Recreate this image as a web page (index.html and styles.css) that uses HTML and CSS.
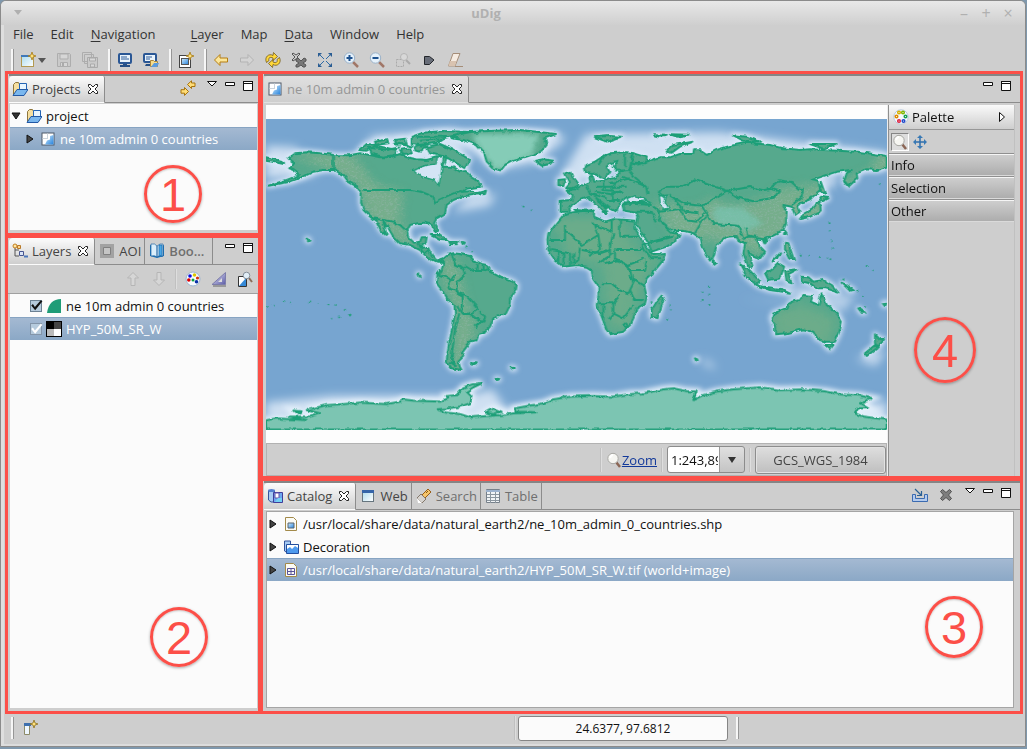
FILE: index.html
```html
<!DOCTYPE html>
<html lang="en">
<head>
<meta charset="utf-8">
<title>uDig</title>
<link rel="stylesheet" href="styles.css">
</head>
<body>
<svg class="sprite" aria-hidden="true">
  <defs>
    <linearGradient id="g-blue" x1="0" y1="0" x2="1" y2="1"><stop offset="0" stop-color="#d4ecfb"/><stop offset="1" stop-color="#2482dd"/></linearGradient>
    <linearGradient id="g-sky" x1="0" y1="0" x2="1" y2="1"><stop offset="0" stop-color="#a9dbef"/><stop offset="1" stop-color="#fff"/></linearGradient>
    <linearGradient id="g-violet" x1="0" y1="0" x2="1" y2="1"><stop offset="0" stop-color="#eef"/><stop offset="1" stop-color="#5a5aa5"/></linearGradient>
  </defs>
  <symbol id="i-new" viewBox="0 0 16 16"><rect x="1.500" y="3.500" width="12" height="11" fill="url(#g-sky)" stroke="#b39a52"/><path d="M1 3h9v2H1z" fill="#3f78b8"/><path d="M12 0l1 3 3 1-3 1-1 3-1-3-3-1 3-1z" fill="#ffe17a" stroke="#a77b16" stroke-width=".8"/></symbol>
  <symbol id="i-save" viewBox="0 0 16 16"><path d="M1.500 1.500h12l1 1v12h-13z" fill="#cacaca" stroke="#adadad"/><path d="M4 2h8v5H4zM4.500 10.500h7v4h-7z" fill="#d6d6d6" stroke="#adadad"/><path d="M6 11h2v3H6z" fill="#aaa"/></symbol>
  <symbol id="i-saveall" viewBox="0 0 16 16"><path d="M.5.500h9v9h-9zM2.500 2.500h9v9h-9z" fill="#cecece" stroke="#adadad"/><path d="M5.500 5.500h10v10h-10z" fill="#cacaca" stroke="#aaa"/><path d="M7.500 6h6v3h-6zM8.500 12h4v3h-4z" fill="#d8d8d8" stroke="#aaa"/></symbol>
  <symbol id="i-screen" viewBox="0 0 16 16"><rect x="2" y="2" width="12" height="9" rx="1" fill="#e9f3fb" stroke="#2a5795" stroke-width="2"/><path d="M4 5h6M4 7h8" stroke="#315f9b"/><path d="M6 12h4v1h3v2H3v-2h3z" fill="#254f86"/></symbol>
  <symbol id="i-screens" viewBox="0 0 16 16"><rect x="1" y="2" width="12" height="8" rx="1" fill="#e9f3fb" stroke="#2a5795" stroke-width="2"/><path d="M3 5h6M3 7h4" stroke="#315f9b"/><path d="M3 12h4v2H2z" fill="#254f86"/><path d="M7.500 14.500v-6h3l1 1h3v5z" fill="#f7dd8c" stroke="#a8853d"/><path d="M8 15l3-4h5l-2 4z" fill="#5b9be0"/></symbol>
  <symbol id="i-newmap" viewBox="0 0 16 16"><rect x="1.500" y="3.500" width="11" height="12" fill="#fff" stroke="#444"/><rect x="3.500" y="6.500" width="7" height="6" fill="url(#g-blue)" stroke="#555"/><path d="M12 0l1 3 3 1-3 1-1 3-1-3-3-1 3-1z" fill="#ffe17a" stroke="#a77b16" stroke-width=".8"/></symbol>
  <symbol id="i-back" viewBox="0 0 16 16"><path d="M1.500 8L7 2.500V6h7.500v4H7v3.500z" fill="#fbe69a" stroke="#b57d12"/></symbol>
  <symbol id="i-fwd" viewBox="0 0 16 16"><path d="M14.500 8L9 2.500V6H1.500v4H9v3.500z" fill="#d4d4d4" stroke="#b3b3b3"/></symbol>
  <symbol id="i-refresh" viewBox="0 0 16 16"><path d="M8 3.500C4 1 -1 5 1.500 10.500l2.500-2C3 6 5 4.500 8 6v2.500L12.500 4.500 8.500.500zM8 12.500c4 2.500 9-1.500 6.500-7l-2.500 2c1 2.500-1 4-4 2.500V7.500L3.500 11.500l4 4z" fill="#ffd83b" stroke="#745c1c" stroke-width=".8"/></symbol>
  <symbol id="i-cross" viewBox="0 0 16 16"><path d="M2.500 4.500l2-2L8 5.500l3.500-3 2 2L10.500 8l3 3.500-2 2L8 10.500l-3.500 3-2-2L5.500 8z" fill="#7d7d7d" stroke="#505050" stroke-linejoin="round"/></symbol>
  <symbol id="i-crosses" viewBox="0 0 16 16"><path d="M1 2l1-1 3 2 3-2 1 1-3 3 3 3-1 1-3-2-3 2-1-1 3-3z" fill="#ccc" stroke="#555"/><path d="M5 7l2-1 3 3 3-3 2 1v2l-3 2 3 2-1 2h-2l-2-2-3 2H5v-2l3-2-3-2z" fill="#777" stroke="#555"/></symbol>
  <symbol id="i-extent" viewBox="0 0 16 16"><path d="M2 2l5 5M14 2L9 7M2 14l5-5M14 14L9 9" stroke="#2d6aa6"/><path d="M1 1h4L1 5zM15 1v4l-4-4zM1 15v-4l4 4zM15 15h-4l4-4z" fill="#2a5d93"/></symbol>
  <symbol id="i-zin" viewBox="0 0 16 16"><path d="M10 10l5 5" stroke="#a17768" stroke-width="2.500"/><circle cx="6.500" cy="6" r="5.200" fill="#e5f1fb" stroke="#9bb2c8"/><path d="M3.500 6h6M6.500 3v6" stroke="#1e528f" stroke-width="2"/></symbol>
  <symbol id="i-zout" viewBox="0 0 16 16"><path d="M10 10l5 5" stroke="#a17768" stroke-width="2.500"/><circle cx="6.500" cy="6" r="5.200" fill="#e5f1fb" stroke="#9bb2c8"/><path d="M3.500 6h6" stroke="#1e528f" stroke-width="2"/></symbol>
  <symbol id="i-zsel" viewBox="0 0 16 16"><rect x="1.500" y="7.500" width="7" height="7" fill="none" stroke="#aaa" stroke-dasharray="2 1"/><path d="M11 8l4 4" stroke="#aaa" stroke-width="2"/><circle cx="9" cy="5" r="3.500" fill="#d8d8d8" stroke="#b5b5b5"/></symbol>
  <symbol id="i-next" viewBox="0 0 16 16"><path d="M3.500 4.500h5L13 8l-4.500 4.500h-5z" fill="#686d78" stroke="#23262b"/></symbol>
  <symbol id="i-erase" viewBox="0 0 16 16"><path d="M6 1.500h7L8 14H1.500z" fill="#f5ebe1" stroke="#a58d78"/><path d="M3 9h6.500L8 14H1.500z" fill="#d9c3b0"/><path d="M8 14.500h8" stroke="#a58d78"/></symbol>
  <symbol id="i-map" viewBox="0 0 16 16"><rect x="2" y="2" width="12" height="12" fill="#fff" stroke="#4d5968"/><path d="M7.500 2.500v5h-5M3 7.500h5" stroke="#cbd4dc" fill="none"/><path d="M13.500 4v9.500H5l2-4 3-1V5z" fill="url(#g-blue)"/></symbol>
  <symbol id="i-project" viewBox="0 0 16 16"><path d="M1.500 13.500v-10l2-2h3l1 2h3v10z" fill="#f6dfa0" stroke="#8e763c"/><path d="M7.500 2.500h7v7h-7z" fill="#e8f5ff" stroke="#2464b4"/><path d="M1 14.500l4-6h11l-4 6z" fill="#7ab7ee" stroke="#2158a5"/></symbol>
  <symbol id="i-link" viewBox="0 0 16 16"><path d="M7.500 4.500L11.500.800v2.200h3.500v3.500h-3.500v2z" fill="#ffdd77" stroke="#a7730c"/><path d="M8.500 11.500L4.500 7.500v2.200H1v3.500h3.500v2.200z" fill="#ffdd77" stroke="#a7730c"/></symbol>
  <symbol id="i-menu" viewBox="0 0 12 12"><path d="M1.500 1.500h9L6 6z" fill="#fff" stroke="#111"/></symbol>
  <symbol id="i-min" viewBox="0 0 12 12"><path d="M1.500 2.500h9v3h-9z" fill="#fff" stroke="#111"/></symbol>
  <symbol id="i-max" viewBox="0 0 12 12"><path d="M1.500 1.500h9v9h-9z" fill="#fff" stroke="#111"/><path d="M1 1h10v3H1z" fill="#111"/><path d="M2 2.500h8" stroke="#fff"/></symbol>
  <symbol id="i-close" viewBox="0 0 12 12"><path d="M1.500 1.500h2L6 4l2.500-2.500h2v2L8 6l2.500 2.500v2h-2L6 8l-2.500 2.500h-2v-2L4 6 1.500 3.500z" fill="#fff" stroke="#222"/></symbol>
  <symbol id="i-open" viewBox="0 0 12 12"><path d="M2 3h8L6 9z" fill="#333" stroke="#111"/></symbol>
  <symbol id="i-shut" viewBox="0 0 12 12"><path d="M3 2v8l6-4z" fill="#444" stroke="#111"/></symbol>
  <symbol id="i-layers" viewBox="0 0 16 16"><path d="M3 5v8h4M3 7h4" fill="none" stroke="#555"/><circle cx="3" cy="3" r="2" fill="#ffe6a0" stroke="#c07d20"/><path d="M5.500 2.500h3v3h-3z" fill="#ffd487" stroke="#b87827"/><path d="M7.500 8.500h4v4h-4z" fill="#d9e4f7" stroke="#465590"/><path d="M12 13.500h4" stroke="#4b77bb" stroke-width="2"/></symbol>
  <symbol id="i-aoi" viewBox="0 0 16 16"><path d="M1 1h14v14H1z" fill="#a2a2a2"/><path d="M4.500 4.500h7v7h-7z" fill="#c5c5c5" stroke="#808080"/></symbol>
  <symbol id="i-book" viewBox="0 0 16 16"><path d="M1 2l7 2 7-2v11l-7 2-7-2z" fill="#1c72b6"/><path d="M2 1q4-1 6 2v11q-2-2-6-1zM14 1q-3-1-6 2v11q2-2 6-1z" fill="#dceffb" stroke="#2366a1" stroke-width=".7"/><path d="M10 2h3v12l-1.500-2L10 14z" fill="#4ba8e6" stroke="#1769aa" stroke-width=".7"/></symbol>
  <symbol id="i-up" viewBox="0 0 16 16"><path d="M8 1.500L13.500 7H10v7.500H6V7H2.500z" fill="#d6d6d6" stroke="#b5b5b5"/></symbol>
  <symbol id="i-down" viewBox="0 0 16 16"><path d="M8 14.500L2.500 9H6V1.500h4V9h3.500z" fill="#d6d6d6" stroke="#b5b5b5"/></symbol>
  <symbol id="i-style" viewBox="0 0 16 16"><circle cx="8" cy="8" r="7" fill="#f8fbff" stroke="#9bb5d0"/><circle cx="5" cy="5" r="1.800" fill="#0b0be0"/><circle cx="9.500" cy="4" r="1.800" fill="#dcc600"/><circle cx="12.500" cy="7" r="1.600" fill="#d4330a"/><circle cx="3.800" cy="9" r="1.800" fill="#d00"/><circle cx="8" cy="9" r="1.500" fill="#06a040"/><circle cx="11.500" cy="10.800" r="1.800" fill="#092fa8"/></symbol>
  <symbol id="i-tri" viewBox="0 0 16 16"><path d="M14.500 1.500v12H1z" fill="url(#g-violet)" stroke="#7d7daa"/><path d="M11 7v4H7z" fill="#ddd"/><path d="M2 15h13" stroke="#999" stroke-width="2"/></symbol>
  <symbol id="i-zoomlayer" viewBox="0 0 16 16"><path d="M1.500 5.500h8v10h-8z" fill="#fff" stroke="#333"/><path d="M2 15l7-8v8z" fill="#3589d7"/><path d="M12 7l3 4" stroke="#8a6c58" stroke-width="2"/><circle cx="9.500" cy="4.500" r="3.300" fill="#e2eef7" stroke="#87909a"/></symbol>
  <symbol id="i-poly" viewBox="0 0 16 16"><path d="M1 15Q3 1 15 1v14z" fill="#1e9c77"/></symbol>
  <symbol id="i-raster" viewBox="0 0 16 16"><path d="M0 0h16v16H0z"/><path d="M8 1h7v7H8z" fill="#444"/><path d="M1 8h7v7H1z" fill="#bbb"/><path d="M8 8h7v7H8z" fill="#fff"/></symbol>
  <symbol id="i-pal" viewBox="0 0 16 16"><circle cx="8" cy="8" r="7.200" fill="#f6f9fd" stroke="#b8cade"/><g fill="#fff" stroke-width="1.500"><circle cx="6" cy="3.500" r="1.300" stroke="#d4b000"/><circle cx="10" cy="3.500" r="1.300" stroke="#7fb800"/><circle cx="3.500" cy="7.500" r="1.300" stroke="#e08a00"/><circle cx="12.500" cy="7.500" r="1.300" stroke="#17a053"/><circle cx="6" cy="12" r="1.300" stroke="#dc1f3c"/><circle cx="10.500" cy="12" r="1.300" stroke="#1f47c8"/></g></symbol>
  <symbol id="i-glass" viewBox="0 0 16 16"><path d="M10 10l4 5" stroke="#8b6655" stroke-width="2.500"/><circle cx="7" cy="6.500" r="5.200" fill="#f6f6f2" stroke="#a7a7a3"/><path d="M4 6q1-3 3-3" stroke="#fff" stroke-width="2" fill="none"/></symbol>
  <symbol id="i-pan" viewBox="0 0 16 16"><path d="M8 2v12M2 8h12" stroke="#2f6fac" stroke-width="1.500"/><path d="M8 1l3 3H5zM8 15l3-3H5zM1 8l3-3v6zM15 8l-3-3v6z" fill="#3879b5"/></symbol>
  <symbol id="i-right" viewBox="0 0 12 12"><path d="M3.500 1.500v9L8.500 6z" fill="#fff" stroke="#111"/></symbol>
  <symbol id="i-catalog" viewBox="0 0 16 16"><path d="M1.500 3v9q2 3 6 2V3z" fill="#a7cbf3" stroke="#34549c"/><ellipse cx="4.500" cy="2.500" rx="3.500" ry="1.500" fill="#5580d0"/><path d="M6.500 4.500h9v10h-9z" fill="#6da8f0" stroke="#403d9a"/><path d="M8 5v5h4V5z" fill="#fff" stroke="#6650a7"/><path d="M8 14l3-4h4v4z" fill="#73d1f4"/></symbol>
  <symbol id="i-deco" viewBox="0 0 16 16"><path d="M1.500 3v9q2 2 6 2V2h-6z" fill="#a7cbf3" stroke="#34549c"/><path d="M3.500 5.500h12v9h-12z" fill="#4e9aee" stroke="#234f9f"/><path d="M4 10l3-2 2 2 3-3 3 2v-3H4z" fill="#fff"/></symbol>
  <symbol id="i-web" viewBox="0 0 16 16"><rect x="2.500" y="2.500" width="11" height="11" fill="url(#g-sky)" stroke="#66757e"/><path d="M2 2h12v3H2z" fill="#3565a9"/></symbol>
  <symbol id="i-torch" viewBox="0 0 16 16"><path d="M6 7l6-6 3 3-6 6z" fill="#f6c56b" stroke="#9a5e17"/><path d="M5 6l5 5-4 4-5-5z" fill="#d6d3cf" stroke="#82776b"/><path d="M1 10l5 5H2z" fill="#fff"/><path d="M10 5l2-2" stroke="#845b14"/></symbol>
  <symbol id="i-table" viewBox="0 0 16 16"><path d="M1.500 1.500h13v13h-13z" fill="#f1f4f6" stroke="#77818b"/><path d="M1 2h14v2H1z" fill="#9cb2ce"/><path d="M2 6.500h12M2 9.500h12M2 12.500h12M5.500 4v11M10.500 4v11" stroke="#8b969f"/></symbol>
  <symbol id="i-shp" viewBox="0 0 16 16"><path d="M2.500 1.500h8l3 3v10h-11z" fill="#fbfbf5" stroke="#a38a4a"/><path d="M5 7h6v5H5z" fill="url(#g-blue)" stroke="#59656e"/></symbol>
  <symbol id="i-tif" viewBox="0 0 16 16"><path d="M2.500 1.500h8l3 3v10h-11z" fill="#fbfbf5" stroke="#a38a4a"/><path d="M4.500 6.500h7v6h-7zM8 6v7M4 9.500h8" fill="none" stroke="#59529a"/></symbol>
  <symbol id="i-import" viewBox="0 0 16 16"><path d="M.5 7.500h3v4h9v-4h3v7H.5z" fill="#b4cbed" stroke="#3b6bb0"/><path d="M3 2l6 6M9.500 4v4.500H5" stroke="#2a6094" fill="none" stroke-width="1.200"/></symbol>
  <symbol id="i-fast" viewBox="0 0 16 16"><path d="M2.500 4.500h5v10h-5z" fill="#eef7ff" stroke="#8d8a68"/><path d="M2 3h7v3H2z" fill="#3e70ae"/><path d="M12 0l1 3 3 1-3 1-1 3-1-3-3-1 3-1z" fill="#ffe17a" stroke="#8d7020" stroke-width=".8"/></symbol>
</svg>

<div class="window">
  <header class="titlebar">
    <button class="wm" aria-label="Window menu"><svg viewBox="0 0 10 8"><path d="M1 1h8L5 6z" fill="#b0b0b0"/></svg></button>
    <h1 class="title">uDig</h1>
    <div class="wm-set">
      <button class="wm" aria-label="Minimize">–</button><button class="wm" aria-label="Maximize">+</button><button class="wm" aria-label="Close">×</button>
    </div>
  </header>

  <nav class="menubar">
    <button>File</button><button>Edit</button><button class="gap-after"><u>N</u>avigation</button>
    <button><u>L</u>ayer</button><button>Map</button><button><u>D</u>ata</button><button>Window</button><button>Help</button>
  </nav>

  <div class="toolbar">
    <span class="handle"></span>
    <button class="drop" aria-label="New"><svg><use href="#i-new"/></svg><svg class="caret" viewBox="0 0 8 5"><path d="M0 0h8L4 5z" fill="#555"/></svg></button>
    <button aria-label="Save"><svg><use href="#i-save"/></svg></button>
    <button aria-label="Save all"><svg><use href="#i-saveall"/></svg></button>
    <span class="handle"></span>
    <button aria-label="Monitor"><svg><use href="#i-screen"/></svg></button>
    <button aria-label="Monitor folder"><svg><use href="#i-screens"/></svg></button>
    <span class="handle"></span>
    <button aria-label="New map"><svg><use href="#i-newmap"/></svg></button>
    <span class="handle"></span>
    <button aria-label="Back"><svg><use href="#i-back"/></svg></button>
    <button aria-label="Forward"><svg><use href="#i-fwd"/></svg></button>
    <button aria-label="Refresh"><svg><use href="#i-refresh"/></svg></button>
    <button aria-label="Stop"><svg><use href="#i-crosses"/></svg></button>
    <button aria-label="Zoom to extent"><svg><use href="#i-extent"/></svg></button>
    <button aria-label="Zoom in"><svg><use href="#i-zin"/></svg></button>
    <button aria-label="Zoom out"><svg><use href="#i-zout"/></svg></button>
    <button aria-label="Zoom to selection"><svg><use href="#i-zsel"/></svg></button>
    <button aria-label="Next"><svg><use href="#i-next"/></svg></button>
    <button aria-label="Clear selection"><svg><use href="#i-erase"/></svg></button>
  </div>

  <main class="workbench">
    <div class="side">
      <section class="panel projects">
        <div class="tabs">
          <button class="tab on"><svg><use href="#i-project"/></svg>Projects<svg class="x"><use href="#i-close"/></svg></button>
          <div class="tools">
            <button class="b" aria-label="Link"><svg><use href="#i-link"/></svg></button>
            <button class="s" aria-label="View menu"><svg><use href="#i-menu"/></svg></button>
            <button class="s" aria-label="Minimize"><svg><use href="#i-min"/></svg></button>
            <button class="s" aria-label="Maximize"><svg><use href="#i-max"/></svg></button>
          </div>
        </div>
        <ul class="tree">
          <li><svg class="tw"><use href="#i-open"/></svg><svg><use href="#i-project"/></svg>project</li>
          <li class="sel child"><svg class="tw"><use href="#i-shut"/></svg><svg><use href="#i-map"/></svg>ne 10m admin 0 countries</li>
        </ul>
        <span class="mark one">1</span>
      </section>

      <section class="panel layers">
        <div class="tabs">
          <button class="tab on"><svg><use href="#i-layers"/></svg>Layers<svg class="x"><use href="#i-close"/></svg></button>
          <button class="tab"><svg><use href="#i-aoi"/></svg>AOI</button>
          <button class="tab dim strong"><svg><use href="#i-book"/></svg>Boo...</button>
          <div class="tools">
            <button class="s" aria-label="Minimize"><svg><use href="#i-min"/></svg></button>
            <button class="s" aria-label="Maximize"><svg><use href="#i-max"/></svg></button>
          </div>
        </div>
        <div class="viewbar">
          <button aria-label="Move up"><svg><use href="#i-up"/></svg></button>
          <button aria-label="Move down"><svg><use href="#i-down"/></svg></button>
          <span class="rule"></span>
          <button aria-label="Style"><svg><use href="#i-style"/></svg></button>
          <button aria-label="Filter"><svg><use href="#i-tri"/></svg></button>
          <button aria-label="Zoom to layer"><svg><use href="#i-zoomlayer"/></svg></button>
        </div>
        <ul class="tree checks">
          <li><label><input type="checkbox" checked><svg><use href="#i-poly"/></svg>ne 10m admin 0 countries</label></li>
          <li class="sel"><label><input type="checkbox" checked><svg><use href="#i-raster"/></svg>HYP_50M_SR_W</label></li>
        </ul>
        <span class="mark two">2</span>
      </section>
    </div>

    <div class="center">
      <section class="panel editor">
        <div class="tabs">
          <button class="tab on faded"><svg><use href="#i-map"/></svg>ne 10m admin 0 countries<svg class="x"><use href="#i-close"/></svg></button>
          <div class="tools">
            <button class="s" aria-label="Minimize"><svg><use href="#i-min"/></svg></button>
            <button class="s" aria-label="Maximize"><svg><use href="#i-max"/></svg></button>
          </div>
        </div>
        <div class="editor-body">
          <div class="mapcol">
            <div class="mapwrap">
              <svg class="map" viewBox="0 0 1863 933" role="img" aria-label="World map">
                <defs>
                  <filter id="rough" x="0" y="0" width="1863" height="933" filterUnits="userSpaceOnUse"><feTurbulence type="fractalNoise" baseFrequency=".05" numOctaves="3" seed="4" result="n"/><feDisplacementMap in="SourceGraphic" in2="n" scale="12" xChannelSelector="R" yChannelSelector="G"/></filter>
                  <filter id="glow" x="0" y="0" width="1863" height="933" filterUnits="userSpaceOnUse"><feGaussianBlur stdDeviation="8"/></filter>
                  <filter id="soft" x="0" y="0" width="1863" height="933" filterUnits="userSpaceOnUse"><feGaussianBlur stdDeviation="14"/></filter>
                  <filter id="grain" x="0" y="0" width="1863" height="933" filterUnits="userSpaceOnUse"><feGaussianBlur in="SourceGraphic" stdDeviation="14" result="b"/><feTurbulence type="fractalNoise" baseFrequency=".2" numOctaves="2" seed="9"/><feColorMatrix values="0 0 0 0 .24  0 0 0 0 .45  0 0 0 0 .34  7 0 0 0 -3.700"/><feComposite in2="b" operator="in" result="g"/><feMerge><feMergeNode in="b"/><feMergeNode in="g"/></feMerge></filter>
                  <path id="na" transform="translate(-18 -147)" d="M85 265L105 250 140 247 180 250 220 255 270 256 300 250 330 256 360 262 390 262 420 252 440 262 470 268 500 270 530 262 560 262 550 290 575 290 600 305 620 303 630 320 655 335 662 350 620 356 605 366 640 362 650 370 678 362 675 372 640 374 605 380 580 390 560 405 555 430 530 445 522 460 533 480 527 487 515 465 495 458 470 460 450 465 443 480 448 505 462 518 480 515 485 502 500 502 497 520 480 530 505 535 515 555 530 572 545 566 552 578 530 578 510 568 495 555 480 540 450 525 420 520 400 500 385 475 370 455 380 495 362 480 350 455 330 440 310 420 303 395 305 370 290 350 265 335 250 315 220 300 190 300 160 305 130 320 90 335 25 347 80 330 120 315 100 300 85 295 105 280ZM575 205L600 190 640 185 700 182 780 180 830 185 888 192 855 205 860 225 845 245 800 260 760 272 735 285 722 302 700 295 680 275 672 250 650 225 610 210ZM825 272L850 268 880 272 870 282 845 287ZM500 232L540 222 580 240 628 268 615 295 595 283 560 262 510 250ZM330 235L350 228 410 240 405 255 370 260 335 252ZM300 240L320 222 350 225 320 242ZM420 240L450 235 455 250 430 252ZM455 200L490 188 550 183 630 186 590 195 550 205 530 218 480 225 455 222ZM405 210L435 206 440 222 410 224ZM345 215L380 208 385 220 350 224ZM470 225L500 228 480 245 465 240ZM18 262L60 272 72 282 40 276 18 272ZM512 495L540 495 565 512 540 510ZM565 516L595 516 590 523 568 522ZM140 506L148 512 144 514ZM605 516L612 518 608 522Z"/>
                  <path id="eu" transform="translate(912 -147)" d="M-28 425L-28 392 5 390 8 375 -10 362 15 358 30 350 50 340 62 335 58 320 68 318 72 335 100 332 130 325 142 318 150 304 178 300 190 250 230 262 228 280 190 278 200 285 245 270 270 262 300 262 330 252 370 252 372 238 395 238 395 245 410 255 440 240 480 228 530 218 600 225 640 235 690 240 720 238 800 242 860 245 895 250 950 258 950 290 920 300 890 298 860 310 862 325 835 350 822 335 830 310 845 300 800 305 740 325 725 330 745 335 750 360 720 388 690 400 680 410 690 425 675 435 665 410 640 405 650 425 648 460 640 480 600 500 580 508 560 505 570 530 585 545 570 565 545 555 535 545 548 590 535 590 520 550 525 520 505 510 500 498 470 500 440 525 430 560 420 572 400 540 392 505 370 490 340 482 310 483 275 455 290 475 305 488 328 492 320 510 290 530 245 545 235 520 200 465 205 440 200 428 165 422 160 405 175 400 240 398 222 385 205 380 195 388 170 380 150 398 140 425 120 415 100 400 75 380 90 400 110 415 100 425 70 395 55 380 30 390 5 405 -5 425ZM45 295L50 285 75 275 95 262 120 250 170 247 192 250 180 300 140 302 130 290 145 272 130 275 110 290 118 305 105 325 90 322 82 310 65 312 48 308ZM-15 310L0 305 10 325 25 345 5 355 -12 355 0 340ZM-35 330L-15 328 -20 348 -35 345ZM750 395L752 425 720 440 690 447 700 432 730 415 740 395ZM750 380L775 385 755 395ZM755 335L768 372 752 365ZM290 245L310 225 370 215 330 230 305 248ZM75 202L115 198 155 200 110 215ZM252 196L290 197 270 200ZM300 193L355 194 320 200ZM490 196L530 200 570 215 520 212ZM720 222L800 222 760 236ZM15 420L50 424 70 418 70 424ZM645 482L650 490 642 495ZM582 512L592 510 586 520ZM95 425L112 424 108 434Z"/>
                  <path id="sa" transform="translate(-18 393)" d="M535 32L548 25 560 15 580 10 600 12 630 18 640 30 665 42 680 45 692 65 720 80 755 92 770 105 768 120 750 145 748 170 738 190 700 205 690 230 672 250 655 255 650 270 630 275 620 290 605 310 610 320 595 335 600 352 605 360 575 355 560 335 562 310 568 275 578 230 585 190 583 165 560 145 545 120 530 100 532 75 545 55 550 40ZM633 340L650 340 640 345ZM752 352L765 356 758 358ZM475 70L482 75 478 80ZM707 386L718 387 712 390Z"/>
                  <path id="af" transform="translate(912 393)" d="M0 -112L40 -117 72 -120 72 -100 105 -85 130 -92 170 -90 195 -88 195 -65 210 -40 225 -15 240 5 250 15 285 12 280 30 255 60 230 85 222 105 230 140 225 160 200 175 190 205 180 225 160 245 120 253 110 240 95 200 80 165 85 140 85 110 68 85 65 60 50 50 20 45 -20 50 -45 30 -65 0 -68 -30 -65 -50 -40 -80 -20 -105ZM275 137L282 145 262 205 245 200 245 180 260 155ZM510 43L540 62 570 95 560 105 530 80ZM565 108L640 118 660 128 600 120ZM585 70L605 60 625 40 642 50 630 85 595 90ZM645 62L682 58 655 72 665 100 650 95ZM695 80L715 82 730 95 760 90 785 105 805 128 765 115 740 115 720 100 700 95ZM645 -22L655 -20 660 -5 672 30 660 25 645 -5ZM605 35L630 10 622 22ZM430 28L440 38 432 45ZM605 205L610 190 650 175 665 155 690 150 700 135 728 138 722 155 745 165 755 130 770 165 800 190 815 215 808 245 795 275 765 275 740 265 730 245 700 238 650 250 615 253 615 230ZM765 285L790 285 780 298ZM915 253L930 268 942 268 925 290 915 280ZM885 310L915 285 920 295 890 318ZM815 98L850 120 840 122ZM865 175L885 188 875 188ZM938 160L950 158 945 168ZM375 325L382 328 378 332Z"/>
                  <path id="an" transform="translate(-18 393)" d="M18 510L50 505 140 510 90 500 150 500 180 490 140 480 200 465 250 462 300 458 380 462 420 455 430 448 460 452 540 455 565 445 560 438 590 435 610 412 640 402 665 400 640 412 620 425 635 440 630 460 600 470 560 476 530 478 560 488 600 492 630 502 680 498 720 495 760 490 830 487 770 485 765 475 800 468 850 460 880 448 930 440 1000 438 1060 440 1110 432 1150 430 1210 418 1240 415 1280 423 1310 425 1300 450 1330 435 1370 425 1420 418 1500 412 1560 420 1630 418 1700 425 1740 433 1800 437 1835 445 1800 460 1825 475 1795 475 1785 490 1810 500 1880 509 1880 539 19 539ZM675 488L700 475 725 485 700 492ZM100 482L125 484 110 490Z"/>
                  <clipPath id="land"><use href="#na"/><use href="#eu"/><use href="#sa"/><use href="#af"/></clipPath>
                </defs>
                <rect width="1863" height="933" fill="#77a5d0"/>
                <g fill="#cfe0f2" filter="url(#soft)">
                  <path d="M0 80l90 5 10 15 80 20-40 50L0 180zM270 110l50-60 250-20 30 100-330 0zM540 40h330l30 20-90 70-110 20-100-60zM960 45l400-5 503 60v50H1000l-60 50-60-20zM1640 180l80-15-20 40-70 10zM610 230l80-5-20 35-110 20zM0 850l200-20h400l80-20 40 60 180-10v50L0 900zM1680 850l183 0v60h-150zM1770 720l90-30-30 50zM1300 715l40 20 10 15-30-10z"/>
                  <path d="M1420 540l180 10-60-50 60 0 170 30-40 50-90-20z" opacity=".7"/>
                </g>
                <g fill="#dceafa" stroke="#dceafa" stroke-width="15" stroke-linejoin="round" filter="url(#glow)"><use href="#na"/><use href="#eu"/><use href="#sa"/><use href="#af"/></g>
                <use href="#an" fill="none" stroke="#e4f0fb" stroke-width="22" filter="url(#glow)"/>
                <g filter="url(#rough)">
                  <g fill="#57a98d"><use href="#na"/><use href="#eu"/><use href="#sa"/><use href="#af"/></g>
                  <g clip-path="url(#land)">
                    <g filter="url(#grain)" fill="#76ae8c">
                      <path d="M80 110L250 100 330 200 410 220 400 310 450 380 400 370 300 290 280 200 190 150zM530 420l40 0 40 170 20 10-30 130-40 60 10-220-40-100zM1160 250l120 20 60-30 60 20 100-20 40-30 200-20 80-40 20-50 130 10-10 50-200 50-80 60-60 90-90 50-130-30-60-20-100 10z"/>
                    </g>
                    <path d="M860 300h200l60 110 50 0-60 130-20 90-60-10-20-180-100-30zM1520 580l90-20 100 40-30 90-150-40z" fill="#6cac8a" filter="url(#soft)"/>
                    <path d="M1340 265l90 0 60 50-50 20-90-20z" fill="#78c5b2" opacity=".7" filter="url(#glow)"/>
                    <path d="M620 45h200l-20 60-110 50-60-80z" fill="#85ccb7" filter="url(#glow)"/>
                  </g>
                  <use href="#an" fill="#7cc5b2"/>
                  <g fill="none" stroke="#1f9f78" stroke-width="6" stroke-linejoin="round"><use href="#na"/><use href="#eu"/><use href="#sa"/><use href="#af"/><use href="#an"/></g>
                  <g fill="#d3e4f5" stroke="#1f9f78" stroke-width="4">
                    <path d="M442 152l40-14 28-3 4-20 18-3-5 42-8 46-12-16-40-11z"/>
                    <path d="M1180 231l22-3-5 20 12 20-12 7-14-22zM1084 238l20-8 30 8 5 8-54 6z"/>
                  </g>
                  <g fill="none" stroke="#1f9f78" stroke-width="6" stroke-linejoin="round">
                    <path transform="translate(-18 -147)" d="M219 255v48M310 360h145l30 6 35 14 5 18 15-10 40-18 25-8M335 445l35 5 30 5 20 10 20 18M475 520l10 18M505 540l-12 12M320 232l60 8 40-8M400 218l60 12M470 200l90 0M480 212l60-4"/>
                    <path transform="translate(-18 393)" d="M575 12l10 30 25 12 5 20-25 25 0 30 15 8 0 50 5 5 25 0 20-15-15-20-20-20-25-8-5-10-20-5-5-15 20-25M530 72l30 10 20 10M615 48l25 15 25 0 20-5M653 43v20M668 44v20M598 190l-15 60-8 70 10 30M625 188l20 15 25 10 5-10-15-20M650 235l-5-10 28-12M600 185l-10-20M570 335l20 15"/>
                    <path transform="translate(912 -147)" d="M178 300l20 25 30 25 5 25M158 320l70 30M100 335v25l60 5M50 345l10 25 50 15M140 330l-15 30M265 365l30-15 40 0 45-22 50 20 40 15 70-12 40 10 20-5 25-25 40 5 20 20 15 0-5 25-30 25M470 360l30 22 50 12 65-12 15-18-40-10M265 365l20 20M470 362l-40 25-35 20-50-5-35-20-10-10M395 407l15 25 20 30 75 5M310 385l35 40 40 5M250 410l20 15 60-8 20 35M345 450l35 5 25-25M200 425l45 0 15 35M270 455l-5-30M160 400l85 5M375 490l20-35 15-15M505 467l15 40 20-10 20 5M530 470l5 30 25 0M215 525l50-15 45-10M120 340l60-15M130 395l-5-25 30-5M165 252l0 40M85 285l20-30 40-5M75 365l60 10M80 350l90 0M110 390l40 0"/>
                    <path transform="translate(912 393)" d="M-60 -30h45v-45M-15 -60l50 45 50-30-15-40M75 -75l50 20V-90M150 -90v50M150 -40h60M130 -50l-10 40 0 30M30 -10l-5 40-20 10M85 -45l5 45-30 15M-60 0l60 10M35 0l55 10 30-10M135 -5l0 30 40 20 50-20M85 40l45-30M100 40l50-10 30 30 10 40-15 30-30-10-20-20-30 0M180 60l45 0 5-25M140 0l80 0M175 80l50 30M85 160l45 0 20-25M100 160v50M130 160l0 30 30 15 30-40M130 190l-15 20M180 120l15 30 25 0M-35 0v35M-20 10v35M0 10v35M10 10v30M215 -10l30 35 30 0M160 225l8-8 6 8-8 8z"/>
                  </g>
                  <g fill="none" stroke="#1f9f78" stroke-width="5" stroke-dasharray="5 19 3 28">
                    <path d="M0 565l60-20 20 10M130 550l100 10 20 30-60 10M770 265l40 15M1310 545v-40M1330 500v60M1550 400l160 20M1800 440l30 20M1730 480l60 50 10 50M1840 195l20 5M600 380l30 30 0 60M1100 540l120 20-20 50M1690 310l10 90-10 30"/>
                  </g>
                </g>
              </svg>
            </div>
            <div class="mapbar">
              <span class="rule"></span>
              <a class="zoomlink" href="#"><svg><use href="#i-glass"/></svg><span>Zoom</span></a>
              <span class="rule"></span>
              <div class="combo"><input type="text" value="1:243,894,528" aria-label="Map scale"><button aria-label="Choose scale"><svg viewBox="0 0 8 6"><path d="M0 0h8L4 6z" fill="#333"/></svg></button></div>
              <span class="rule"></span>
              <button class="crs">GCS_WGS_1984</button>
            </div>
          </div>
          <aside class="palette">
            <button class="pal-head"><svg><use href="#i-pal"/></svg><span>Palette</span><svg class="x"><use href="#i-right"/></svg></button>
            <div class="pal-tools"><button class="pressed" aria-label="Zoom"><svg><use href="#i-glass"/></svg></button><button aria-label="Pan"><svg><use href="#i-pan"/></svg></button></div>
            <button class="drawer">Info</button><button class="drawer">Selection</button><button class="drawer">Other</button>
          </aside>
        </div>
        <span class="mark four">4</span>
      </section>

      <section class="panel catalog">
        <div class="tabs">
          <button class="tab on"><svg><use href="#i-catalog"/></svg>Catalog<svg class="x"><use href="#i-close"/></svg></button>
          <button class="tab"><svg><use href="#i-web"/></svg>Web</button>
          <button class="tab dim"><svg><use href="#i-torch"/></svg>Search</button>
          <button class="tab dim"><svg><use href="#i-table"/></svg>Table</button>
          <div class="tools">
            <button class="b" aria-label="Import"><svg><use href="#i-import"/></svg></button>
            <button class="b" aria-label="Remove"><svg><use href="#i-cross"/></svg></button>
            <button class="s" aria-label="View menu"><svg><use href="#i-menu"/></svg></button>
            <button class="s" aria-label="Minimize"><svg><use href="#i-min"/></svg></button>
            <button class="s" aria-label="Maximize"><svg><use href="#i-max"/></svg></button>
          </div>
        </div>
        <ul class="tree">
          <li><svg class="tw"><use href="#i-shut"/></svg><svg><use href="#i-shp"/></svg>/usr/local/share/data/natural_earth2/ne_10m_admin_0_countries.shp</li>
          <li><svg class="tw"><use href="#i-shut"/></svg><svg><use href="#i-deco"/></svg>Decoration</li>
          <li class="sel"><svg class="tw"><use href="#i-shut"/></svg><svg><use href="#i-tif"/></svg>/usr/local/share/data/natural_earth2/HYP_50M_SR_W.tif (world+image)</li>
        </ul>
        <span class="mark three">3</span>
      </section>
    </div>
  </main>

  <footer class="status">
    <span class="handle"></span>
    <button class="fast" aria-label="Show view"><svg><use href="#i-fast"/></svg></button>
    <span class="rule"></span>
    <output class="coords">24.6377, 97.6812</output>
    <span class="handle"></span>
  </footer>
</div>
</body>
</html>
```
FILE: styles.css
```css
* { box-sizing: border-box; }
body {
  margin: 0;
  background: #7f98ad;
  font: 13px/18px "Open Sans", "Noto Sans", sans-serif;
  color: #111;
}
button {
  font: inherit;
  color: inherit;
  background: none;
  border: 0;
  padding: 0;
  margin: 0;
}
svg { width: 16px; height: 16px; flex: none; display: block; }
.sprite { position: absolute; width: 0; height: 0; }
.window {
  display: flex;
  flex-direction: column;
  min-height: calc(100vh - 2px);
  margin-right: 1px;
  background: #cecece;
  border: 1px solid #8b8b8b;
  border-radius: 6px 6px 0 0;
  box-shadow: inset 3px 0 #dedede, inset 0 -2px #dcdcdc;
}

.titlebar {
  display: flex;
  align-items: center;
  height: 24px;
  padding: 0 12px;
  background: linear-gradient(#e8e8e8, #cfcfcf);
  border-radius: 5px 5px 0 0;
  color: #b0b0b0;
}
.title { flex: 1; margin: 0 10px 0 0; text-align: center; font-size: 13px; }
.wm { width: 10px; font-size: 16px; }
.wm svg { width: 10px; height: 8px; }
.wm-set { display: flex; gap: 12px; }

.menubar { display: flex; gap: 17px; height: 18px; padding-left: 12px; color: #333; align-items: center; }
.menubar .gap-after { margin-right: 18px; }
u { text-underline-offset: 2px; }

.toolbar { display: flex; align-items: center; gap: 10px; height: 28px; padding: 6px 0 0 10px; }
.toolbar .drop { display: flex; align-items: center; gap: 2px; }
.toolbar .caret { width: 8px; height: 5px; }
.handle { width: 3px; height: 22px; background: #f6f6f6; border-right: 1px solid #969696; margin-right: -4px; flex: none; }
.rule { width: 2px; height: 24px; background: #c0c0c0; border-right: 1px solid #dedede; flex: none; }

.workbench { flex: 1; display: flex; margin: 0 2px 0 4px; min-height: 0; }
.side { width: 256px; display: flex; flex-direction: column; flex: none; }
.center { flex: 1; display: flex; flex-direction: column; min-width: 0; margin-left: -1px; }
.panel {
  position: relative;
  display: flex;
  flex-direction: column;
  border: 3px solid #fc4f48;
  min-height: 0;
}
.projects { height: 165px; }
.layers { flex: 1; }
.editor { flex: 1; }
.catalog { height: 236px; }
.layers, .catalog { margin-top: -1px; }

.tabs { display: flex; height: 29px; border-top: 2px solid #858585; flex: none; margin-left: 1px; }
.layers .tabs { height: 27px; border-top: 0; }
.tab {
  display: flex;
  align-items: center;
  gap: 4px;
  padding: 0 3px 0 4px;
  color: #444;
  border-right: 1px solid #8c8c8c;
  border-bottom: 1px solid #8c8c8c;
  white-space: nowrap;
}
.tab.on { background: linear-gradient(#fcfcfc, #cecece); border-bottom-color: transparent; border-radius: 4px 2px 0 0; padding: 0 5px 0 3px; }
.tab.on.faded { background: linear-gradient(#e0e0e0, #cecece); color: #969696; }
.tab.dim { color: #6f6f6f; }
.tab.strong { font-weight: 600; padding-right: 8px; }
.tab .x { width: 12px; height: 12px; margin-left: 2px; }
.tools { flex: 1; display: flex; align-items: flex-start; justify-content: flex-end; gap: 6px; padding: 4px 4px 0 0; border-bottom: 1px solid #8c8c8c; }
.tools .s svg { width: 12px; height: 12px; }
.tools .b { margin-right: 4px; }
.center .tools { padding-right: 8px; }

.tree { list-style: none; margin: 1px 1px 3px 2px; padding: 0; background: #fbfbfb; flex: 1; }
.tree li { display: flex; align-items: center; gap: 4px; height: 23px; white-space: nowrap; }
.tree .child { padding-left: 14px; }
.tree .tw { width: 12px; height: 12px; }
.tree .sel { background: linear-gradient(#a4b9d2, #8ba8c6); border-top: 1px solid #87a4c2; color: #fff; }
.tree.checks li { padding-left: 20px; }
.checks label { display: flex; align-items: center; gap: 4px; }
.catalog .tree { margin: 1px 6px 3px 3px; border: 1px solid #a5a5a5; }
.tree input {
  appearance: none;
  width: 12px;
  height: 12px;
  margin: 0;
  background: #b6cbdd;
  border: 1px solid #6c8193;
  position: relative;
}
.tree input::before {
  content: "";
  position: absolute;
  inset: -2px;
  background: #111;
  clip-path: polygon(16% 50%, 28% 40%, 42% 60%, 84% 12%, 96% 20%, 44% 84%);
}
.sel input { border-color: #8395a9; }
.tree .sel input::before { background: #fff; }

.viewbar { display: flex; align-items: center; justify-content: flex-end; gap: 10px; height: 29px; padding-right: 5px; border-bottom: 1px solid #a0a0a0; flex: none; }
.viewbar .rule { height: 20px; margin: 0 -2px; }
.layers .tree { margin-top: 0; }

.editor-body { flex: 1; display: flex; min-height: 0; margin: 2px 5px 0 3px; }
.mapcol { flex: 1; display: flex; flex-direction: column; min-width: 0; border-right: 1px solid #eee; }
.mapwrap { flex: 1; display: flex; align-items: center; background: #fdfdfd; min-height: 0; }
.map { width: 100%; height: auto; flex: 1; overflow: hidden; }
.mapbar { display: flex; align-items: center; justify-content: flex-end; gap: 4px; height: 33px; border: 1px solid #b2b2b2; }
.zoomlink { display: flex; align-items: center; color: #12399a; }
.combo { display: flex; width: 78px; height: 27px; border: 1px solid #8c8c8c; border-radius: 3px; background: linear-gradient(#e0e0e0, #c4c4c4); }
.combo input { width: 52px; min-width: 0; border: 0; border-right: 1px solid #999; padding: 0 1px 0 3px; background: #fff; font: inherit; color: #111; border-radius: 3px 0 0 3px; }
.combo button { flex: 1; display: grid; place-items: center; }
.combo svg { width: 8px; height: 6px; }
.crs { width: 131px; height: 28px; border: 1px solid #8d8d8d; border-radius: 3px; background: linear-gradient(#dedede, #bfbfbf); box-shadow: inset 0 0 0 1px #e2e2e2; color: #444; }

.palette { width: 127px; display: flex; flex-direction: column; border-left: 1px solid #8f8f8f; border-right: 1px solid #c0c0c0; }
.pal-head { display: flex; align-items: center; gap: 3px; height: 25px; padding: 0 6px 0 4px; border-bottom: 1px solid #979797; background: linear-gradient(#fafafa, #cecece); text-align: left; }
.pal-head span { flex: 1; }
.pal-head .x { width: 12px; height: 12px; }
.pal-tools { display: flex; align-items: center; gap: 3px; height: 23px; padding-left: 2px; }
.pal-tools .pressed { border: 1px solid #858585; border-right-color: #fff; border-bottom-color: #fff; background: #ddd; }
.drawer { height: 23px; padding-left: 2px; text-align: left; border-top: 1px solid #8f8f8f; box-shadow: inset 0 1px #f5f5f5; background: linear-gradient(#cfcfcf, #adadad); border-bottom: 1px solid #dadada; }

.mark {
  position: absolute;
  display: grid;
  place-items: center;
  width: 58px;
  height: 58px;
  border: 3px solid #fc4f48;
  border-radius: 50%;
  color: #fc4f48;
  font: 47px/47px "Liberation Sans", Arial, sans-serif;
  box-shadow: 0 1px 3px #0005, inset 0 1px 2px #0003;
}
.one { right: 56px; bottom: 10px; }
.two { right: 50px; bottom: 44px; height: 60px; }
.three { right: 37px; bottom: 53px; height: 62px; }
.four { right: 44px; bottom: 93px; width: 62px; height: 66px; }

.status { display: flex; align-items: center; height: 32px; padding: 0 0 4px 10px; gap: 8px; }
.status .fast { margin-left: 4px; }
.status .rule { margin-left: auto; }
.coords { width: 210px; height: 25px; line-height: 23px; text-align: center; background: #fbfbfb; border: 1px solid #858585; border-radius: 3px; margin-left: -6px; font-size: 12px; }
.status .coords + .handle { margin-right: 286px; }
```
